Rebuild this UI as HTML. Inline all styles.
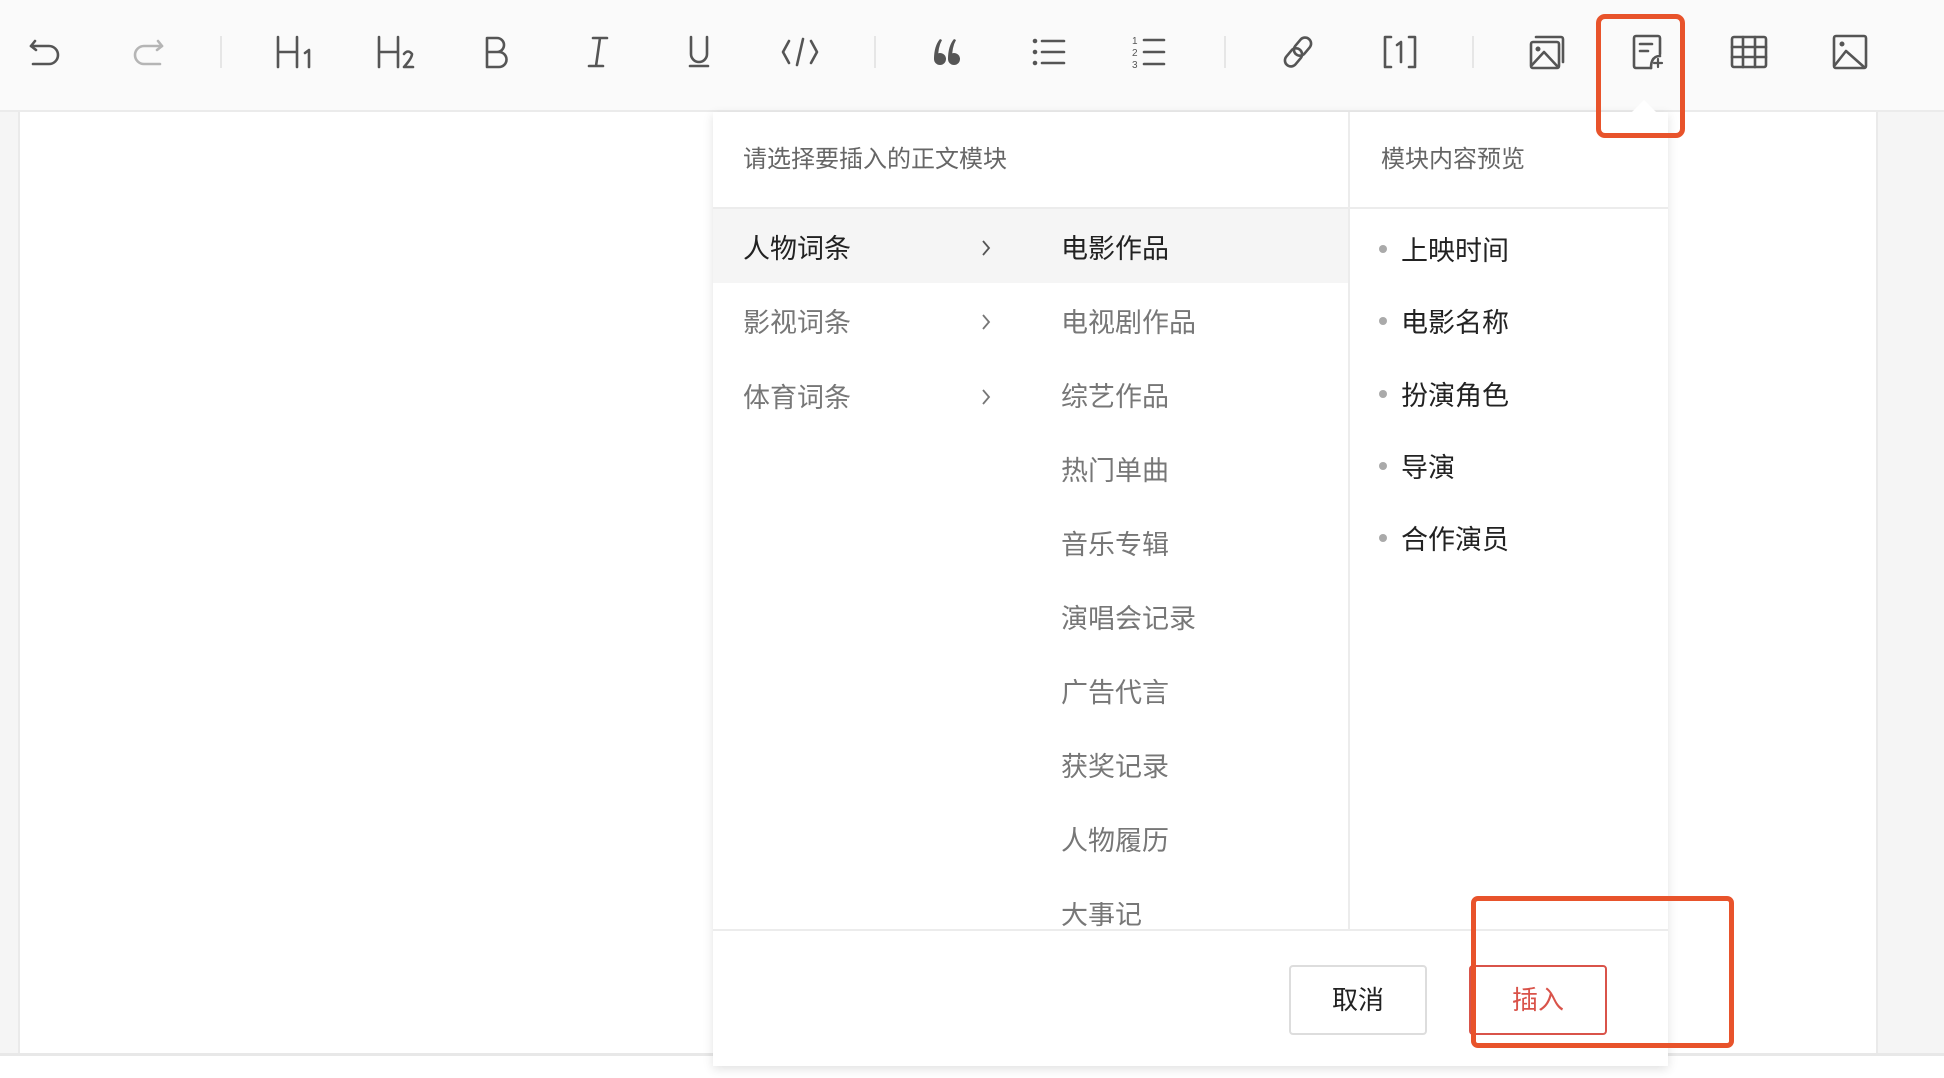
<!DOCTYPE html>
<html><head><meta charset="utf-8">
<style>
*{margin:0;padding:0;box-sizing:border-box}
html,body{width:1944px;height:1078px;overflow:hidden;background:#fff;font-family:"Liberation Sans","Noto Sans CJK SC",sans-serif}
.abs{position:absolute}
#tb{left:0;top:0;width:1944px;height:112px;background:#fafafa;border-bottom:2px solid #ebebeb}
.ic{position:absolute;top:32px;width:40px;height:40px}
.ic svg{width:40px;height:40px;fill:none;stroke:#555;stroke-width:2.6;stroke-linecap:round;stroke-linejoin:round}
.sep{position:absolute;top:36px;width:2px;height:32px;background:#e6e6e6}
.t{position:absolute;font-size:27px;white-space:nowrap;line-height:1}
</style></head><body>
<div class="abs" style="left:0;top:112px;width:20px;height:944px;background:#f5f5f5;border-right:2px solid #eaeaea"></div>
<div class="abs" style="left:1876px;top:112px;width:68px;height:944px;background:#f5f5f5;border-left:2px solid #eaeaea"></div>
<div class="abs" style="left:0;top:1053px;width:1944px;height:3px;background:#e8e8e8"></div>

<div id="tb" class="abs">
<div class="ic" style="left:25px"><svg viewBox="0 0 40 40"><path d="M10 9 L6 14 L11 18"/><path d="M6 14 H24 a9 9 0 0 1 0 18 H8"/></svg></div>
<div class="ic" style="left:128px"><svg viewBox="0 0 40 40" style="stroke:#b5b5b5"><path d="M30 9 L34 14 L29 18"/><path d="M34 14 H16 a9 9 0 0 0 0 18 H32"/></svg></div>
<div class="sep" style="left:220px"></div>
<div class="ic" style="left:275px"><svg viewBox="0 0 40 40"><path d="M3 5 V35 M3 20 H22 M22 5 V35 M30 21 L34 18 V35"/></svg></div>
<div class="ic" style="left:376px"><svg viewBox="0 0 40 40"><path d="M3 5 V35 M3 20 H22 M22 5 V35 M28 22 q4 -5 8 0 q0 4 -8 13 H37"/></svg></div>
<div class="ic" style="left:477px"><svg viewBox="0 0 40 40"><path d="M10 6 V35 H22 a7.5 7.5 0 0 0 0 -15 H10 M10 6 H20 a7 7 0 0 1 0 14"/></svg></div>
<div class="ic" style="left:578px"><svg viewBox="0 0 40 40"><path d="M15 6 H29 M11 34 H25 M22 6 L18 34"/></svg></div>
<div class="ic" style="left:679px"><svg viewBox="0 0 40 40"><path d="M12 5 V22 a8 8 0 0 0 16 0 V5 M11 34 H29"/></svg></div>
<div class="ic" style="left:780px"><svg viewBox="0 0 40 40"><path d="M9 9 L3 20 L9 31 M31 9 L37 20 L31 31 M23 7 L17 33"/></svg></div>
<div class="sep" style="left:874px"></div>
<div class="ic" style="left:927px"><svg viewBox="0 0 40 40" style="fill:#555;stroke:none"><circle cx="13" cy="27" r="6"/><circle cx="27" cy="27" r="6"/><path d="M7 27 Q7 14 13 7 L15 8 Q11 15 11 27Z M21 27 Q21 14 27 7 L29 8 Q25 15 25 27Z"/></svg></div>
<div class="ic" style="left:1029px"><svg viewBox="0 0 40 40"><path d="M13 9 H35 M13 20 H35 M13 31 H35"/><circle cx="6" cy="9" r="1" style="fill:#555"/><circle cx="6" cy="20" r="1" style="fill:#555"/><circle cx="6" cy="31" r="1" style="fill:#555"/></svg></div>
<div class="ic" style="left:1129px"><svg viewBox="0 0 40 40"><path d="M15 8 H35 M15 20 H35 M15 32 H35"/><text x="3" y="12" style="font-size:10px;fill:#555;stroke:none;font-family:Liberation Sans">1</text><text x="3" y="24" style="font-size:10px;fill:#555;stroke:none;font-family:Liberation Sans">2</text><text x="3" y="36" style="font-size:10px;fill:#555;stroke:none;font-family:Liberation Sans">3</text></svg></div>
<div class="sep" style="left:1224px"></div>
<div class="ic" style="left:1278px"><svg viewBox="0 0 40 40"><g transform="rotate(-50 20 20)"><rect x="3" y="14" width="20" height="12" rx="6"/><rect x="17" y="14" width="20" height="12" rx="6"/></g></svg></div>
<div class="ic" style="left:1380px"><svg viewBox="0 0 40 40"><path d="M11 5 H5 V35 H11 M29 5 H35 V35 H29 M17 13 L21 10 V30"/></svg></div>
<div class="sep" style="left:1472px"></div>
<div class="ic" style="left:1527px"><svg viewBox="0 0 40 40"><rect x="4" y="10" width="28" height="26" rx="2"/><path d="M9 5 H34 a2 2 0 0 1 2 2 V30"/><path d="M5 33 L17 20 L31 35"/><circle cx="11" cy="17" r="1.2" style="fill:#555"/></svg></div>
<div class="ic" style="left:1628px"><svg viewBox="0 0 40 40"><path d="M23 36 H8 a2 2 0 0 1 -2 -2 V6 a2 2 0 0 1 2 -2 H30 a2 2 0 0 1 2 2 V22"/><path d="M12 12 H24 M12 19 H20"/><path d="M23 36 Q23 24 32 24" /><path d="M30 27 V35 M26 31 H34" style="stroke-width:2.2"/></svg></div>
<div class="ic" style="left:1729px"><svg viewBox="0 0 40 40"><rect x="3" y="5" width="34" height="30" rx="2"/><path d="M3 15 H37 M3 25 H37 M14 5 V35 M26 5 V35"/></svg></div>
<div class="ic" style="left:1830px"><svg viewBox="0 0 40 40"><rect x="4" y="4" width="32" height="32" rx="2"/><path d="M5 33 L16 19 L34 35"/><circle cx="12" cy="12" r="1.2" style="fill:#555"/></svg></div>
</div>

<div class="abs" style="left:713px;top:112px;width:955px;height:954px;background:#fff;box-shadow:0 3px 10px rgba(0,0,0,0.12)"></div>
<div class="abs" style="left:1631px;top:100px;width:0;height:0;border-left:13px solid transparent;border-right:13px solid transparent;border-bottom:13px solid #fff"></div>
<div class="abs" style="left:713px;top:207px;width:955px;height:2px;background:#ececec"></div>
<div class="abs" style="left:1348px;top:112px;width:2px;height:818px;background:#ececec"></div>
<div class="abs" style="left:713px;top:929px;width:955px;height:2px;background:#ececec"></div>
<div class="abs" style="left:713px;top:209px;width:635px;height:74px;background:#f5f5f5"></div>

<div class="t" style="left:743px;top:148px;font-size:24px;color:#666">请选择要插入的正文模块</div>
<div class="t" style="left:1381px;top:148px;font-size:24px;color:#666">模块内容预览</div>

<div class="t" style="left:743px;top:236px;color:#222">人物词条</div>
<div class="t" style="left:743px;top:310px;color:#777">影视词条</div>
<div class="t" style="left:743px;top:385px;color:#777">体育词条</div>
<svg class="abs" style="left:978px;top:236px" width="16" height="24" viewBox="0 0 16 24"><path d="M5 5 L11 12 L5 19" fill="none" stroke="#555" stroke-width="1.8"/></svg>
<svg class="abs" style="left:978px;top:310px" width="16" height="24" viewBox="0 0 16 24"><path d="M5 5 L11 12 L5 19" fill="none" stroke="#777" stroke-width="1.8"/></svg>
<svg class="abs" style="left:978px;top:385px" width="16" height="24" viewBox="0 0 16 24"><path d="M5 5 L11 12 L5 19" fill="none" stroke="#777" stroke-width="1.8"/></svg>

<div class="t" style="left:1061px;top:236px;color:#222">电影作品</div>
<div class="t" style="left:1061px;top:310px;color:#777">电视剧作品</div>
<div class="t" style="left:1061px;top:384px;color:#777">综艺作品</div>
<div class="t" style="left:1061px;top:458px;color:#777">热门单曲</div>
<div class="t" style="left:1061px;top:532px;color:#777">音乐专辑</div>
<div class="t" style="left:1061px;top:606px;color:#777">演唱会记录</div>
<div class="t" style="left:1061px;top:680px;color:#777">广告代言</div>
<div class="t" style="left:1061px;top:754px;color:#777">获奖记录</div>
<div class="t" style="left:1061px;top:828px;color:#777">人物履历</div>
<div class="t" style="left:1061px;top:902px;color:#777;height:27px;overflow:hidden">大事记</div>

<div class="abs" style="left:1379px;top:245px;width:8px;height:8px;border-radius:50%;background:#aaa"></div>
<div class="abs" style="left:1379px;top:317px;width:8px;height:8px;border-radius:50%;background:#aaa"></div>
<div class="abs" style="left:1379px;top:390px;width:8px;height:8px;border-radius:50%;background:#aaa"></div>
<div class="abs" style="left:1379px;top:462px;width:8px;height:8px;border-radius:50%;background:#aaa"></div>
<div class="abs" style="left:1379px;top:534px;width:8px;height:8px;border-radius:50%;background:#aaa"></div>
<div class="t" style="left:1401px;top:238px;color:#222">上映时间</div>
<div class="t" style="left:1401px;top:310px;color:#222">电影名称</div>
<div class="t" style="left:1401px;top:383px;color:#222">扮演角色</div>
<div class="t" style="left:1401px;top:455px;color:#222">导演</div>
<div class="t" style="left:1401px;top:527px;color:#222">合作演员</div>

<div class="abs" style="left:1289px;top:965px;width:138px;height:70px;border:2px solid #ddd;border-radius:4px;text-align:center;line-height:66px;font-size:26px;color:#222">取消</div>
<div class="abs" style="left:1469px;top:965px;width:138px;height:70px;border:2px solid #d9534a;border-radius:4px;text-align:center;line-height:66px;font-size:26px;color:#d9534a">插入</div>

<div class="abs" style="left:1596px;top:14px;width:89px;height:124px;border:5px solid #e8532b;border-radius:9px"></div>
<div class="abs" style="left:1471px;top:896px;width:263px;height:152px;border:5px solid #e8532b;border-radius:7px"></div>
</body></html>
